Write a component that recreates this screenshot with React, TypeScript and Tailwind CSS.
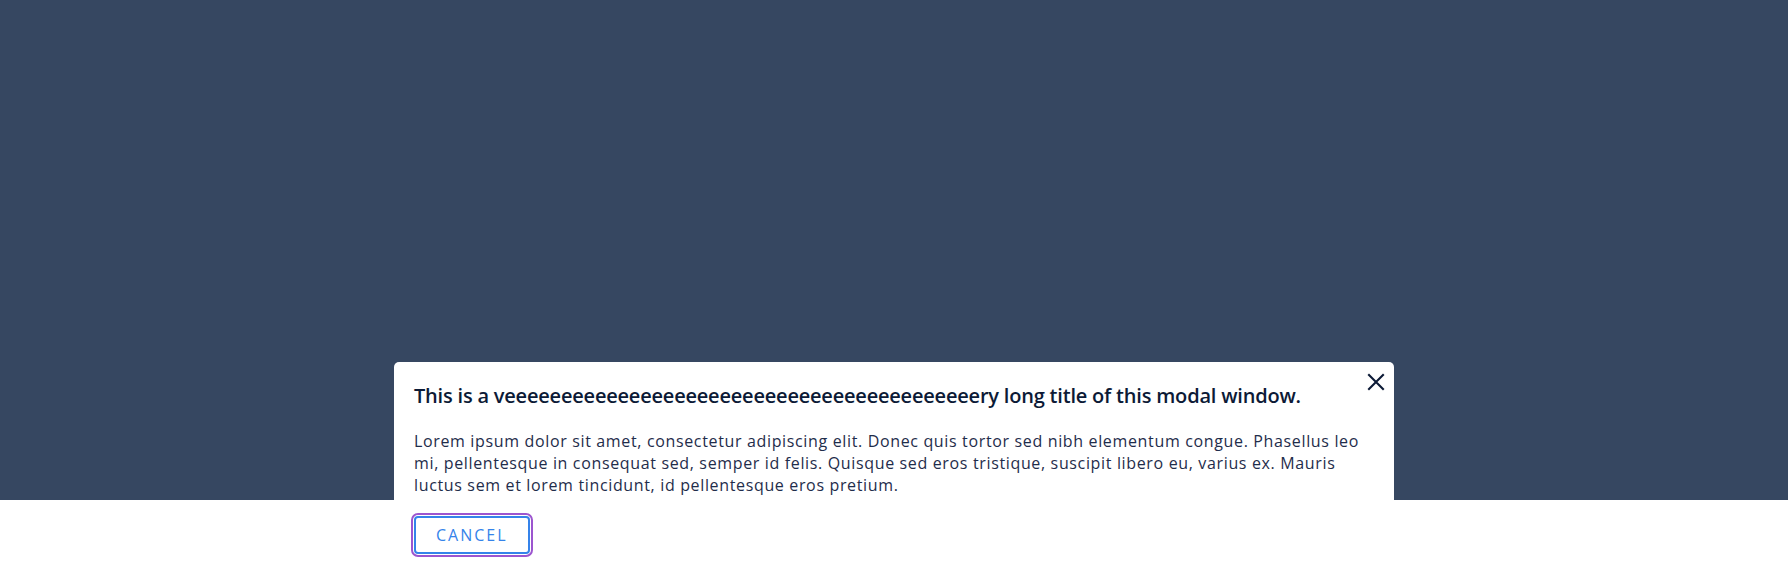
import React from "react";

export default function App() {
  const title =
    "This is a v" + "e".repeat(42) + "ry long title of this modal window.";
  return (
    <div className="relative h-[586px] w-full bg-white" style={{ fontFamily: '"Open Sans", sans-serif' }}>
      <div className="h-[500px] w-full bg-[#364761]" />
      <div className="absolute left-1/2 top-[362px] w-[1000px] -translate-x-1/2 rounded-[5px] bg-white px-5 pb-5 pt-5">
        <button
          type="button"
          className="absolute right-[4px] top-[6px] flex h-[28px] w-[28px] items-center justify-center text-[#0c1a36]"
          aria-label="Close"
        >
          <svg width="28" height="28" viewBox="0 0 24 24" fill="none" stroke="currentColor" strokeWidth="1.8" strokeLinecap="square">
            <path d="M6 6l12 12M18 6L6 18" />
          </svg>
        </button>
        <h2 className="text-[20px] font-semibold leading-[28px] tracking-[-0.2px] text-[#0c1a36]">
          {title}
        </h2>
        <p className="mt-5 text-[16px] leading-[22px] tracking-[0.65px] text-[#1f2d4b]">
          Lorem ipsum dolor sit amet, consectetur adipiscing elit. Donec quis tortor sed nibh elementum congue. Phasellus leo mi, pellentesque in consequat sed, semper id felis. Quisque sed eros tristique, suscipit libero eu, varius ex. Mauris luctus sem et lorem tincidunt, id pellentesque eros pretium.
        </p>
        <div className="mt-5 flex">
          <button
            type="button"
            className="rounded-[4px] border-2 border-[#3583ea] bg-white px-[20px] py-[6px] text-[16px] leading-[22px] tracking-[2px] text-[#3583ea] outline-2 outline-offset-1 outline-[#9c55cf]"
          >
            CANCEL
          </button>
        </div>
      </div>
    </div>
  );
}
